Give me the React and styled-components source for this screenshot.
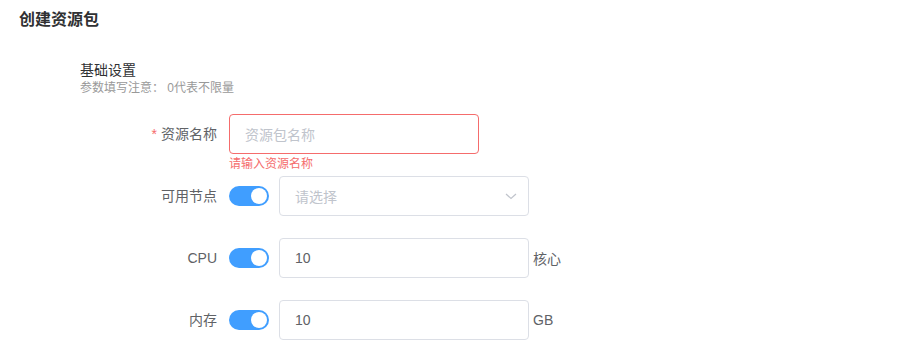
import React from "react";
import styled, { createGlobalStyle } from "styled-components";

const GlobalStyle = createGlobalStyle`
  html, body {
    margin: 0;
    padding: 0;
    background: #ffffff;
  }
  body {
    font-family: "Liberation Sans", "Noto Sans CJK SC", sans-serif;
    color: #606266;
  }
`;

const Page = styled.div`
  width: 908px;
  height: 340px;
  overflow: hidden;
  background: #fff;
`;

const Header = styled.div`
  padding: 10px 19px;
  font-size: 16px;
  line-height: 20px;
  font-weight: bold;
  color: #303133;
`;

const Section = styled.div`
  padding: 21px 0 0 79px;
`;

const SectionTitle = styled.div`
  padding-left: 1px;
  font-size: 14px;
  line-height: 18px;
  color: #303133;
`;

const SectionHint = styled.div`
  padding-left: 1px;
  font-size: 12px;
  line-height: 18px;
  color: #999999;
`;

const Form = styled.div`
  margin-top: 17px;
  display: flex;
  flex-direction: column;
`;

const FormItem = styled.div`
  display: flex;
  align-items: center;
  height: 40px;
  margin-bottom: 22px;
`;

const Label = styled.label`
  width: 150px;
  box-sizing: border-box;
  padding-right: 12px;
  text-align: right;
  font-size: 14px;
  line-height: 40px;
  color: #606266;
`;

const Star = styled.span`
  color: #f56c6c;
  margin-right: 4px;
`;

const Content = styled.div`
  position: relative;
  display: flex;
  align-items: center;
  height: 40px;
`;

const Input = styled.div`
  box-sizing: border-box;
  width: 250px;
  height: 40px;
  padding: 0 15px;
  border: 1px solid ${(p) => (p.$error ? "#f56c6c" : "#dcdfe6")};
  border-radius: 4px;
  display: flex;
  align-items: center;
  justify-content: space-between;
  font-size: 14px;
  color: ${(p) => (p.$placeholder ? "#c0c4cc" : "#606266")};
  background: #fff;
`;

const ErrorText = styled.div`
  position: absolute;
  left: 0;
  top: 100%;
  padding-top: 4px;
  font-size: 12px;
  line-height: 1;
  color: #f56c6c;
  white-space: nowrap;
`;

const Switch = styled.span`
  position: relative;
  display: inline-block;
  width: 40px;
  height: 20px;
  border-radius: 10px;
  background: #409eff;
  margin-right: 10px;

  &::after {
    content: "";
    position: absolute;
    top: 2px;
    left: 22px;
    width: 16px;
    height: 16px;
    border-radius: 50%;
    background: #fff;
  }
`;

const Unit = styled.span`
  margin-left: 4px;
  font-size: 14px;
  color: #606266;
`;

const Arrow = () => (
  <svg width="14" height="14" viewBox="0 0 14 14" style={{ marginRight: -5 }}>
    <path d="M2 5 L7 9.5 L12 5" fill="none" stroke="#c0c4cc" strokeWidth="1.2" />
  </svg>
);

export default function App() {
  return (
    <Page>
      <GlobalStyle />
      <Header>创建资源包</Header>
      <Section>
        <SectionTitle>基础设置</SectionTitle>
        <SectionHint>参数填写注意： 0代表不限量</SectionHint>
        <Form>
          <FormItem>
            <Label>
              <Star>*</Star>资源名称
            </Label>
            <Content>
              <Input $error $placeholder>资源包名称</Input>
              <ErrorText>请输入资源名称</ErrorText>
            </Content>
          </FormItem>
          <FormItem>
            <Label>可用节点</Label>
            <Content>
              <Switch />
              <Input $placeholder>
                请选择
                <Arrow />
              </Input>
            </Content>
          </FormItem>
          <FormItem>
            <Label>CPU</Label>
            <Content>
              <Switch />
              <Input>10</Input>
              <Unit>核心</Unit>
            </Content>
          </FormItem>
          <FormItem>
            <Label>内存</Label>
            <Content>
              <Switch />
              <Input>10</Input>
              <Unit>GB</Unit>
            </Content>
          </FormItem>
        </Form>
      </Section>
    </Page>
  );
}
